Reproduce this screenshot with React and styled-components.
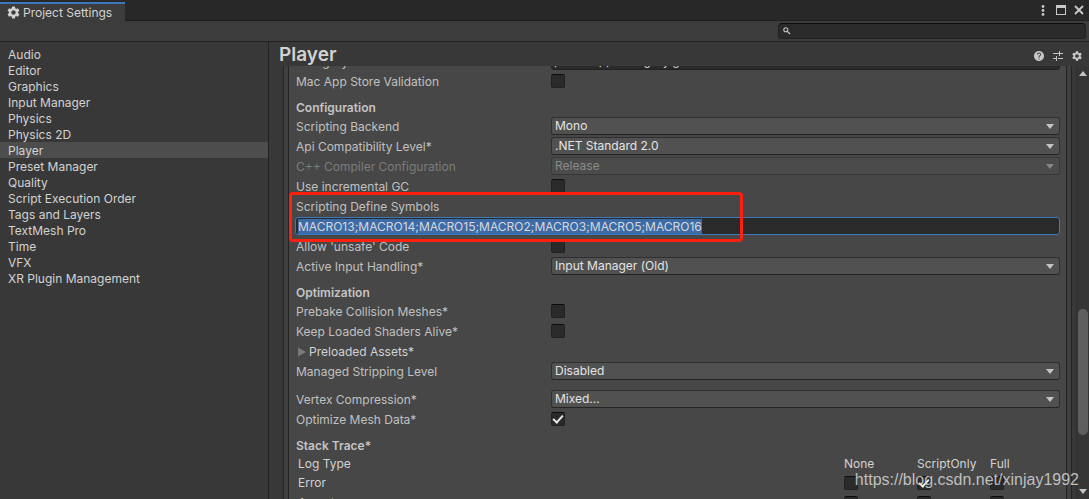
import React, { useEffect, useRef } from "react";
import styled, { createGlobalStyle, css } from "styled-components";
import { MdSettings, MdHelp } from "react-icons/md";

const GlobalStyle = createGlobalStyle`
  * { box-sizing: border-box; }
  body {
    margin: 0;
    background: #383838;
    color: #c4c4c4;
    font: 12px/18px Inter, "Liberation Sans", sans-serif;
  }
  button, input, select { font: inherit; color: inherit; margin: 0; }
`;

const Window = styled.div`
  height: 100vh;
  display: flex;
  flex-direction: column;
  overflow: hidden;
  position: relative;
`;

const TitleBar = styled.header`
  display: flex;
  justify-content: space-between;
  height: 21px;
  flex: none;
  padding-top: 2px;
  background: #282828;
  box-shadow: inset 0 -1px #1f1f1f;
`;

const Tab = styled.button`
  display: flex;
  align-items: center;
  gap: 2px;
  width: 125px;
  padding: 0 0 0 6px;
  border: 0;
  border-top: 2px solid #3a79bb;
  background: #3c3c3c;
  color: #d2d2d2;
  white-space: nowrap;
`;

const WindowControls = styled.div`
  display: flex;
  align-items: flex-start;
  gap: 4px;
  padding: 1px 5px 0 0;
`;

const IconButton = styled.button`
  display: flex;
  align-items: center;
  justify-content: center;
  width: ${(p) => p.$w || 12}px;
  height: 14px;
  padding: 0;
  border: 0;
  background: none;
  color: #c8c8c8;
  svg { display: block; flex: none; }
`;

const Toolbar = styled.div`
  display: flex;
  justify-content: flex-end;
  align-items: center;
  height: 21px;
  flex: none;
  padding-right: 3px;
  background: #3c3c3c;
  border-bottom: 1px solid #232323;
`;

const SearchBox = styled.label`
  display: flex;
  align-items: center;
  width: 308px;
  height: 16px;
  padding-left: 4px;
  border: 1px solid #212121;
  border-top-color: #0d0d0d;
  border-radius: 4px;
  background: #2a2a2a;
  input {
    flex: 1;
    min-width: 0;
    height: 14px;
    padding: 0 4px;
    border: 0;
    outline: 0;
    background: none;
  }
`;

const Body = styled.div`
  display: flex;
  flex: 1;
  min-height: 0;
`;

const Sidebar = styled.nav`
  width: 269px;
  flex: none;
  padding-top: 4px;
  border-right: 1px solid #232323;
`;

const NavItem = styled.a`
  display: block;
  height: 16px;
  padding-left: 8px;
  line-height: 18px;
  color: #d2d2d2;
  text-decoration: none;
  background: ${(p) => (p.$active ? "#4d4d4d" : "none")};
`;

const Main = styled.main`
  flex: 1;
  min-width: 0;
  display: flex;
  flex-direction: column;
`;

const MainHeader = styled.div`
  display: flex;
  justify-content: space-between;
  height: 24px;
  flex: none;
  padding: 0 6px 0 10px;
`;

const Title = styled.h1`
  margin: 0;
  font-size: 19px;
  line-height: 26px;
  font-weight: 600;
  color: #d2d2d2;
`;

const HeaderTools = styled.div`
  display: flex;
  align-items: flex-end;
  gap: 7px;
  padding-bottom: 3px;
`;

const ScrollArea = styled.div`
  display: flex;
  flex: 1;
  min-height: 0;
  padding-left: 14px;
`;

const OuterFrame = styled.div`
  display: flex;
  flex: 1;
  min-width: 0;
  margin-right: 4px;
  padding: 0 4px;
  overflow: hidden;
  background: #404040;
  border: solid #242424;
  border-width: 0 1px;
`;

const Panel = styled.section`
  flex: 1;
  min-width: 0;
  padding: 0 6px 0 7px;
  background: #474747;
  border: solid #242424;
  border-width: 0 1px;
`;

const Scrolled = styled.div`
  margin-top: -14px;
`;

const Row = styled.div`
  display: flex;
  height: 18px;
  margin-bottom: ${(p) => (p.$gapAfter ? 10 : 2)}px;
`;

const Label = styled.label`
  width: 255px;
  flex: none;
  line-height: 20px;
  white-space: nowrap;
  color: ${(p) => (p.$disabled ? "#7c7c7c" : "#c0c0c0")};
`;

const SectionTitle = styled.h2`
  height: 25px;
  margin: 0;
  padding-top: 7px;
  font-size: 12px;
  line-height: 18px;
  font-weight: 600;
`;

const SelectBox = styled.div`
  position: relative;
  flex: 1;
  min-width: 0;
  color: ${(p) => (p.$disabled ? "#8a8a8a" : "#e4e4e4")};
  select {
    display: block;
    width: 100%;
    height: 18px;
    padding: 0 20px 0 3px;
    appearance: none;
    border: 1px solid ${(p) => (p.$disabled ? "#3b3b3b" : "#303030")};
    border-bottom-color: ${(p) => (p.$disabled ? "#363636" : "#242424")};
    border-radius: 3px;
    background: ${(p) => (p.$disabled ? "#4b4b4b" : "#515151")};
    color: inherit;
    opacity: 1;
    line-height: 16px;
  }
  svg {
    position: absolute;
    right: 6px;
    top: 7px;
    pointer-events: none;
    fill: ${(p) => (p.$disabled ? "#868686" : "#c4c4c4")};
  }
`;

const inputLook = css`
  height: 18px;
  padding: 0 2px;
  border: 1px solid #212121;
  border-radius: 3px;
  background: #2a2a2a;
  color: #d2d2d2;
  outline: 0;
`;

const TextField = styled.input`
  ${inputLook}
  flex: 1;
  min-width: 0;
`;

const SymbolsGroup = styled.div`
  position: relative;
  margin: 0 0 2px -1px;
`;

const SymbolsLabel = styled.label`
  display: block;
  height: 20px;
  padding-left: 1px;
  line-height: 20px;
  color: #c0c0c0;
`;

const SymbolsField = styled.input`
  ${inputLook}
  display: block;
  width: 100%;
  border-color: #3a79bb;
  line-height: 16px;
  &::selection { background: #3d6ba8; color: #d8d8d8; }
`;

const Highlight = styled.div`
  position: absolute;
  left: -6px;
  top: -5px;
  width: 454px;
  height: 50px;
  border: 3px solid #ff2010;
  border-radius: 4px;
  pointer-events: none;
`;

const Check = styled.input`
  appearance: none;
  display: grid;
  place-items: center;
  width: 14px;
  height: 14px;
  margin: 2px 0;
  flex: none;
  border: 1px solid #212121;
  border-top-color: #0d0d0d;
  border-radius: 2px;
  background: #2a2a2a;
  &:checked::before {
    content: "";
    width: 8px;
    height: 4px;
    border: solid #e8e8e8;
    border-width: 0 0 2px 2px;
    transform: translateY(-1px) rotate(-48deg);
  }
`;

const Foldout = styled.button`
  display: flex;
  align-items: center;
  gap: 3px;
  height: 20px;
  padding: 0 0 0 2px;
  border: 0;
  background: none;
  color: #d2d2d2;
  line-height: 20px;
  svg { fill: #7b7b7b; }
`;

const LogTable = styled.table`
  width: 100%;
  table-layout: fixed;
  border-collapse: collapse;
  color: #d2d2d2;
  th, td {
    height: 20px;
    padding: 0;
    font-weight: 400;
    text-align: left;
    vertical-align: top;
    white-space: nowrap;
  }
  thead th { height: 19px; }
  th:first-child { padding-left: 2px; }
`;

const Col = styled.col`
  width: ${(p) => p.$w}px;
`;

const ScrollBar = styled.div`
  display: flex;
  flex-direction: column;
  width: 13px;
  flex: none;
  background: #353535;
  border-left: 1px solid #303030;
`;

const ScrollArrow = styled.button`
  display: flex;
  align-items: center;
  justify-content: center;
  height: 15px;
  flex: none;
  padding: 0;
  border: 0;
  background: none;
  svg { fill: #c4c4c4; }
`;

const ScrollSpace = styled.div`
  flex: ${(p) => p.$share};
`;

const Thumb = styled.div`
  flex: 126;
  margin: 0 1px;
  border-radius: 5px;
  background: #5f5f5f;
`;

const Watermark = styled.div`
  position: absolute;
  right: 10px;
  bottom: 9px;
  font: 16px/20px "Liberation Sans", Arial, sans-serif;
  color: rgba(215, 215, 215, 0.85);
`;

const Down = () => (
  <svg width="8" height="5" viewBox="0 0 8 5"><path d="M0 0h8L4 5z" /></svg>
);
const Up = () => (
  <svg width="8" height="5" viewBox="0 0 8 5"><path d="M0 5h8L4 0z" /></svg>
);

function Dropdown({ id, label, value, disabled, gapAfter }) {
  return (
    <Row $gapAfter={gapAfter}>
      <Label htmlFor={id} $disabled={disabled}>{label}</Label>
      <SelectBox $disabled={disabled}>
        <select id={id} disabled={disabled} defaultValue={value}>
          <option>{value}</option>
        </select>
        <Down />
      </SelectBox>
    </Row>
  );
}

function Toggle({ id, label, checked }) {
  return (
    <Row>
      <Label htmlFor={id}>{label}</Label>
      <Check id={id} type="checkbox" defaultChecked={checked} />
    </Row>
  );
}

const pages = [
  "Audio", "Editor", "Graphics", "Input Manager", "Physics", "Physics 2D",
  "Player", "Preset Manager", "Quality", "Script Execution Order",
  "Tags and Layers", "TextMesh Pro", "Time", "VFX", "XR Plugin Management",
];
const traceModes = ["None", "ScriptOnly", "Full"];
const logTypes = ["Error", "Assert"];

export default function App() {
  const symbols = useRef(null);
  useEffect(() => {
    symbols.current.focus({ preventScroll: true });
    symbols.current.select();
  }, []);

  return (
    <Window>
      <GlobalStyle />
      <TitleBar>
        <Tab><MdSettings size={15} />Project Settings</Tab>
        <WindowControls>
          <IconButton $w={10} aria-label="Menu">
            <svg width="4" height="11" fill="currentColor">
              <circle cx="2" cy="1.5" r="1.4" />
              <circle cx="2" cy="5.5" r="1.4" />
              <circle cx="2" cy="9.5" r="1.4" />
            </svg>
          </IconButton>
          <IconButton $w={18} aria-label="Maximize">
            <svg width="10" height="10" fill="currentColor" fillRule="evenodd">
              <path d="M0 0h10v10H0zM1 3v6h8V3z" />
            </svg>
          </IconButton>
          <IconButton $w={10} aria-label="Close">
            <svg width="10" height="10" stroke="currentColor" strokeWidth="1.8">
              <path d="M1 1l8 8M9 1L1 9" />
            </svg>
          </IconButton>
        </WindowControls>
      </TitleBar>
      <Toolbar>
        <SearchBox>
          <svg width="8" height="8" fill="none" stroke="#c4c4c4">
            <circle cx="2.8" cy="2.8" r="2" strokeWidth="1.1" />
            <path d="M4.4 4.4L7 7" strokeWidth="1.3" />
          </svg>
          <input type="text" aria-label="Search settings" />
        </SearchBox>
      </Toolbar>
      <Body>
        <Sidebar>
          {pages.map((p) => (
            <NavItem key={p} href="#" $active={p === "Player"}>{p}</NavItem>
          ))}
        </Sidebar>
        <Main>
          <MainHeader>
            <Title>Player</Title>
            <HeaderTools>
              <IconButton aria-label="Help"><MdHelp size={12} /></IconButton>
              <IconButton aria-label="Presets">
                <svg width="10" height="10" fill="currentColor">
                  <path d="M0 2h6v1H0zM6 0h1v5H6zM7 2h3v1H7zM0 7h3v1H0zM3 5h1v5H3zM5 7h5v1H5z" />
                </svg>
              </IconButton>
              <IconButton aria-label="Options"><MdSettings size={12} /></IconButton>
            </HeaderTools>
          </MainHeader>
          <ScrollArea>
            <OuterFrame>
              <Panel>
                <Scrolled>
                  <Row>
                    <Label htmlFor="category">Category</Label>
                    <TextField id="category" defaultValue="public.app-category.games" />
                  </Row>
                  <Toggle id="validation" label="Mac App Store Validation" />
                  <SectionTitle>Configuration</SectionTitle>
                  <Dropdown id="backend" label="Scripting Backend" value="Mono" />
                  <Dropdown id="api" label="Api Compatibility Level*" value=".NET Standard 2.0" />
                  <Dropdown id="cpp" label="C++ Compiler Configuration" value="Release" disabled />
                  <Toggle id="gc" label="Use incremental GC" />
                  <SymbolsGroup>
                    <SymbolsLabel htmlFor="symbols">Scripting Define Symbols</SymbolsLabel>
                    <SymbolsField
                      id="symbols"
                      ref={symbols}
                      spellCheck={false}
                      defaultValue="MACRO13;MACRO14;MACRO15;MACRO2;MACRO3;MACRO5;MACRO16"
                    />
                    <Highlight />
                  </SymbolsGroup>
                  <Toggle id="unsafe" label="Allow 'unsafe' Code" />
                  <Dropdown id="input" label="Active Input Handling*" value="Input Manager (Old)" />
                  <SectionTitle>Optimization</SectionTitle>
                  <Toggle id="prebake" label="Prebake Collision Meshes*" />
                  <Toggle id="shaders" label="Keep Loaded Shaders Alive*" />
                  <Row>
                    <Foldout aria-expanded="false">
                      <svg width="8" height="10"><path d="M0 0.5v9L8 5z" /></svg>
                      Preloaded Assets*
                    </Foldout>
                  </Row>
                  <Dropdown id="stripping" label="Managed Stripping Level" value="Disabled" gapAfter />
                  <Dropdown id="vertex" label="Vertex Compression*" value="Mixed..." />
                  <Toggle id="mesh" label="Optimize Mesh Data*" checked />
                  <SectionTitle>Stack Trace*</SectionTitle>
                  <LogTable>
                    <colgroup>
                      <col />
                      <Col $w={73} />
                      <Col $w={73} />
                      <Col $w={70} />
                    </colgroup>
                    <thead>
                      <tr>
                        <th scope="col">Log Type</th>
                        {traceModes.map((m) => <th key={m} scope="col">{m}</th>)}
                      </tr>
                    </thead>
                    <tbody>
                      {logTypes.map((t) => (
                        <tr key={t}>
                          <th scope="row">{t}</th>
                          {traceModes.map((m) => (
                            <td key={m}>
                              <Check
                                type="checkbox"
                                aria-label={`${t}: ${m}`}
                                defaultChecked={t === "Error" && m === "ScriptOnly"}
                              />
                            </td>
                          ))}
                        </tr>
                      ))}
                    </tbody>
                  </LogTable>
                </Scrolled>
              </Panel>
            </OuterFrame>
            <ScrollBar>
              <ScrollArrow aria-label="Scroll up"><Up /></ScrollArrow>
              <ScrollSpace $share={228} />
              <Thumb />
              <ScrollSpace $share={49} />
              <ScrollArrow aria-label="Scroll down"><Down /></ScrollArrow>
            </ScrollBar>
          </ScrollArea>
        </Main>
      </Body>
      <Watermark>https://blog.csdn.net/xinjay1992</Watermark>
    </Window>
  );
}
